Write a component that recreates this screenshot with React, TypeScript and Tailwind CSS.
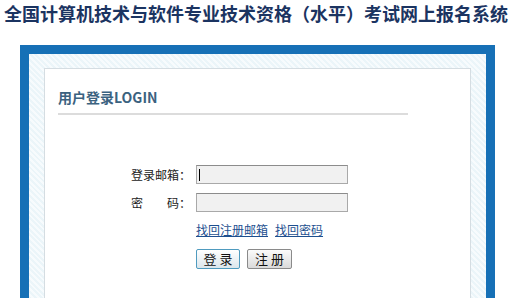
const CJK = "font-['Noto_Sans_CJK_SC','Noto_Sans',sans-serif]";

function Field({ label, caret = false }: { label: string; caret?: boolean }) {
  return (
    <>
      <span className="text-right text-[12px] leading-[19px] text-[#222]">{label}</span>
      <div className="flex h-[19px] w-[152px] items-center border border-[#a9a9a9] border-t-[#8c8c8c] bg-[#f1f1f1] pl-[2px]">
        {caret && <span className="h-[12px] w-px bg-black" />}
      </div>
    </>
  );
}

export default function App() {
  return (
    <div className={`h-[298px] w-[512px] overflow-hidden bg-white ${CJK}`}>
      <h1 className="h-[45px] pt-[3px] text-center text-[18px] font-bold leading-[20px] text-[#1b3461]">
        全国计算机技术与软件专业技术资格（水平）考试网上报名系统
      </h1>

      <div className="ml-[20px] h-[253px] w-[475px] border-[9px] border-b-0 border-[#1670b6] bg-[repeating-linear-gradient(45deg,#ebf5f9_0,#ebf5f9_2px,#f7fbfd_2px,#f7fbfd_4px)] px-[15px] pt-[14px]">
        <div className="h-full border border-b-0 border-[#d5dde2] bg-white pl-[13px] pt-[18px]">
          <div className="w-[350px] border-b-2 border-[#dcdcdc] pb-[6px] text-[14px] font-bold leading-[20px] text-[#3b6280]">
            用户登录LOGIN
          </div>

          <div className="ml-[73px] mt-[50px] grid grid-cols-[60px_152px] gap-x-[5px] gap-y-[9px]">
            <Field label="登录邮箱：" caret />
            <Field label="密　　码：" />
            <span />
            <div className="mt-[2px] flex gap-[7px] text-[12px] leading-[14px] text-[#1d4f8f]">
              <a className="underline">找回注册邮箱</a>
              <a className="underline">找回密码</a>
            </div>
            <span />
            <div className="mt-[3px] flex gap-[7px]">
              <button className="h-[20px] w-[44px] rounded-[2px] border border-[#4f9bbf] bg-[linear-gradient(#ffffff,#dbe6ec)] text-[13px] leading-[16px] text-[#111]">
                登 录
              </button>
              <button className="h-[20px] w-[45px] rounded-[2px] border border-[#8a8a8a] bg-[linear-gradient(#fbfbfb,#dadada)] text-[13px] leading-[16px] text-[#111]">
                注 册
              </button>
            </div>
          </div>
        </div>
      </div>
    </div>
  );
}
